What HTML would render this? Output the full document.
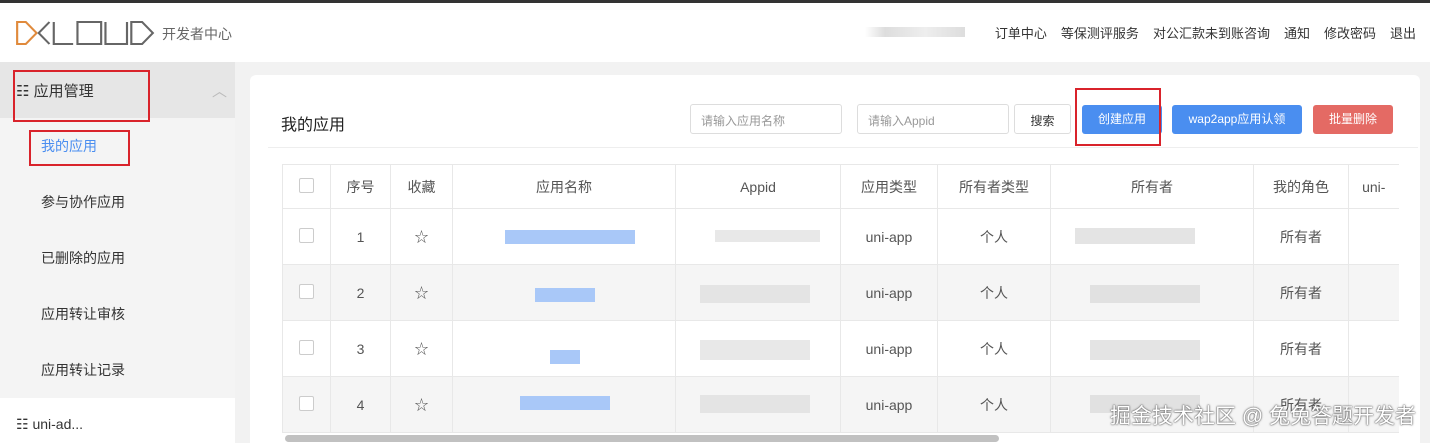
<!DOCTYPE html>
<html><head><meta charset="utf-8"><style>
*{box-sizing:border-box;margin:0;padding:0}
html,body{width:1430px;height:443px;overflow:hidden}
body{background:#f2f2f2;font-family:"Liberation Sans","Noto Sans CJK SC",sans-serif;font-size:14px;color:#333;position:relative}
.top{position:absolute;left:0;top:0;width:1430px;height:62px;background:#fff;border-top:3px solid #333}
.nav{position:absolute;right:14px;top:20px;font-size:13px;color:#333}
.nav span{margin-left:14px}
.side{position:absolute;left:0;top:62px;width:235px;height:381px;background:#f4f4f4}
.mh{height:56px;background:#e6e6e6;padding:18px 0 0 16px;font-size:15px}
.mi{height:56px;padding-left:41px;line-height:56px;font-size:14px;color:#333}
.red{position:absolute;border:2px solid #d9232b}
.card{position:absolute;left:250px;top:75px;width:1170px;height:380px;background:#fff;border-radius:6px}
.inp{position:absolute;height:30px;border:1px solid #ddd;border-radius:3px;font-size:12px;color:#999;padding:7px 10px}
.btn{position:absolute;height:29px;border-radius:3px;color:#fff;font-size:12px;text-align:center;line-height:29px}
table{position:absolute;left:282px;top:164px;border-collapse:collapse;font-size:14px}
td,th{border:1px solid #e8e8e8;text-align:center;font-weight:normal;color:#555;height:56px}
th{height:44px;color:#555}
tr.g td{background:#f5f5f5}
.cb{display:inline-block;width:15px;height:15px;border:1px solid #ccc;border-radius:2px;background:#fff}
.bl{position:absolute;background:#a9c8f8}
.gr{position:absolute;background:#d8d8d8}
.wm{position:absolute;right:14px;top:400px;font-size:21px;color:#fff;text-shadow:0 0 2px #555,0 0 1px #333}
</style></head><body>
<div class="top">
<svg style="position:absolute;left:15px;top:17px" width="140" height="26" viewBox="0 0 130 26" preserveAspectRatio="none" fill="none" stroke-width="2">
<path d="M2 2v22h8l10-11L10 2z" stroke="#e08a3c"/>
<path d="M32 2L22 13l10 11" stroke="#666"/>
<path d="M36 2v22h18" stroke="#666"/>
<rect x="58" y="2" width="22" height="22" stroke="#666"/>
<path d="M84 2v22h20V2" stroke="#666"/>
<path d="M108 2v22h10l10-11-10-11z" stroke="#666"/>
</svg>
<div style="position:absolute;left:162px;top:21px;font-size:14px;color:#666">开发者中心</div>
<div style="position:absolute;left:865px;top:24px;width:100px;height:10px;background:linear-gradient(90deg,#fff,#ddd 20%,#eee 60%,#ddd)"></div>
<div class="nav"><span>订单中心</span><span>等保测评服务</span><span>对公汇款未到账咨询</span><span>通知</span><span>修改密码</span><span>退出</span></div>
</div>
<div class="side">
<div class="mh">☷ 应用管理<span style="position:absolute;left:212px;top:18px;color:#bbb">︿</span></div>
<div class="mi" style="color:#4a8ef0">我的应用</div>
<div class="mi">参与协作应用</div>
<div class="mi">已删除的应用</div>
<div class="mi">应用转让审核</div>
<div class="mi">应用转让记录</div>
<div style="position:absolute;top:336px;left:0;width:235px;height:50px;background:#fff;padding:18px 0 0 16px;font-size:14px">☷ uni-ad...</div>
</div>
<div class="red" style="left:13px;top:70px;width:137px;height:52px"></div>
<div class="red" style="left:29px;top:130px;width:101px;height:36px"></div>
<div class="card">
<div style="position:absolute;left:31px;top:36px;font-size:16px;color:#222">我的应用</div>
<div style="position:absolute;left:18px;top:72px;width:1150px;border-top:1px solid #eee"></div>
</div>
<div class="inp" style="left:690px;top:104px;width:152px">请输入应用名称</div>
<div class="inp" style="left:857px;top:104px;width:152px">请输入Appid</div>
<div class="inp" style="left:1014px;top:104px;width:57px;color:#333;text-align:center;padding:7px 0">搜索</div>
<div class="btn" style="left:1082px;top:105px;width:80px;background:#4a8ef0">创建应用</div>
<div class="btn" style="left:1172px;top:105px;width:130px;background:#4a8ef0">wap2app应用认领</div>
<div class="btn" style="left:1313px;top:105px;width:80px;background:#e46a64">批量删除</div>
<div class="red" style="left:1075px;top:88px;width:86px;height:58px"></div>
<table>
<tr><th style="width:48px"><span class="cb"></span></th><th style="width:60px">序号</th><th style="width:62px">收藏</th><th style="width:223px">应用名称</th><th style="width:165px">Appid</th><th style="width:97px">应用类型</th><th style="width:113px">所有者类型</th><th style="width:203px">所有者</th><th style="width:95px">我的角色</th><th style="width:50px;border-right:none">uni-</th></tr>
<tr><td><span class="cb"></span></td><td>1</td><td>☆</td><td></td><td></td><td>uni-app</td><td>个人</td><td></td><td>所有者</td><td style="border-right:none"></td></tr>
<tr class="g"><td><span class="cb"></span></td><td>2</td><td>☆</td><td></td><td></td><td>uni-app</td><td>个人</td><td></td><td>所有者</td><td style="border-right:none"></td></tr>
<tr><td><span class="cb"></span></td><td>3</td><td>☆</td><td></td><td></td><td>uni-app</td><td>个人</td><td></td><td>所有者</td><td style="border-right:none"></td></tr>
<tr class="g"><td><span class="cb"></span></td><td>4</td><td>☆</td><td></td><td></td><td>uni-app</td><td>个人</td><td></td><td>所有者</td><td style="border-right:none"></td></tr>
</table>
<div class="bl" style="left:505px;top:230px;width:130px;height:14px"></div>
<div class="bl" style="left:535px;top:288px;width:60px;height:14px"></div>
<div class="bl" style="left:550px;top:350px;width:30px;height:14px"></div>
<div class="bl" style="left:520px;top:396px;width:90px;height:14px"></div>
<div class="gr" style="left:715px;top:230px;width:105px;height:12px;opacity:.6"></div>
<div class="gr" style="left:700px;top:285px;width:110px;height:18px;opacity:.6"></div>
<div class="gr" style="left:700px;top:340px;width:110px;height:20px;opacity:.6"></div>
<div class="gr" style="left:700px;top:395px;width:110px;height:18px;opacity:.6"></div>
<div class="gr" style="left:1075px;top:228px;width:120px;height:16px;opacity:.7"></div>
<div class="gr" style="left:1090px;top:285px;width:110px;height:18px;opacity:.7"></div>
<div class="gr" style="left:1090px;top:340px;width:110px;height:20px;opacity:.7"></div>
<div class="gr" style="left:1090px;top:395px;width:110px;height:18px;opacity:.7"></div>
<div style="position:absolute;left:285px;top:435px;width:714px;height:7px;background:#c1c1c1;border-radius:4px"></div>
<div class="wm">掘金技术社区 @ 兔兔答题开发者</div>
</body></html>
